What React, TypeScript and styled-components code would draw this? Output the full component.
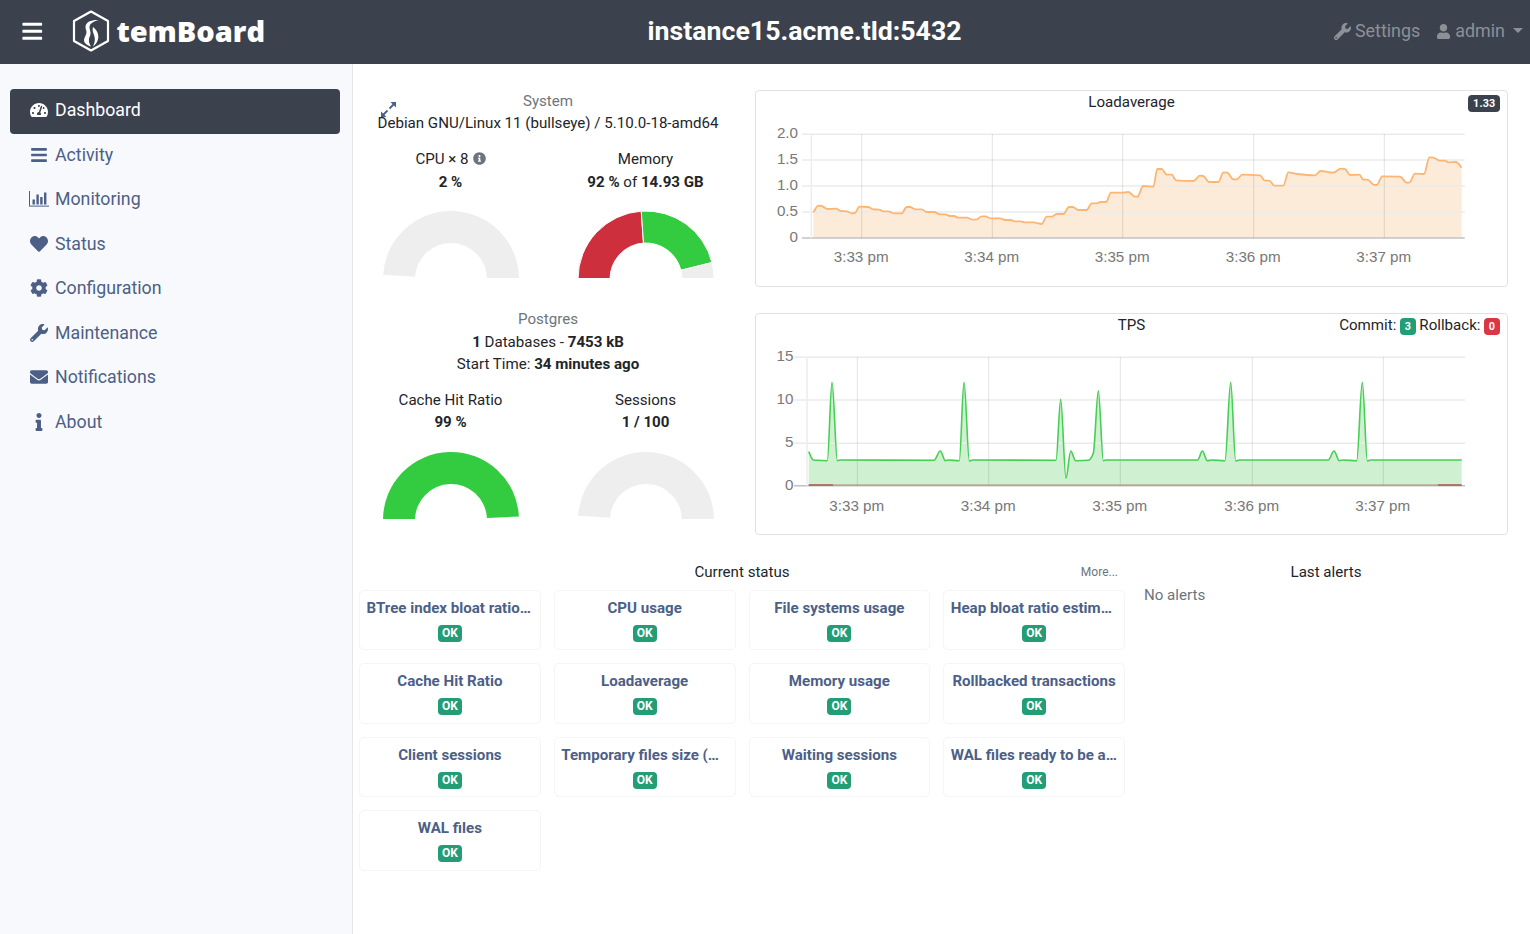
import React from "react";
import styled, { createGlobalStyle } from "styled-components";
import {
  FaBars, FaTachometerAlt, FaHeart, FaCog, FaWrench, FaEnvelope, FaInfo, FaUser, FaInfoCircle,
} from "react-icons/fa";

const Global = createGlobalStyle`
  html, body { margin: 0; padding: 0; background: #fff; }
  body { font-family: Roboto, "Liberation Sans", sans-serif; font-size: 15.1px; line-height: 22.5px; color: #212529; overflow: hidden; }
  * { box-sizing: border-box; }
`;

const Page = styled.div`display: flex; flex-direction: column; height: 934px;`;

const TopBar = styled.header`
  height: 64px; flex: none; background: #3c424d; display: grid; grid-template-columns: auto 1fr auto; align-items: center; padding: 0 7px 2px 21px;
`;
const Brand = styled.div`display: flex; align-items: center; color: #fff;`;
const Burger = styled.span`display: flex; font-size: 22.5px; margin-right: 28px;`;
const LogoText = styled.span`
  font-family: "Open Sans", sans-serif; font-weight: 800; font-size: 29px; margin-left: 7px; line-height: 40px; margin-top: -1px;
`;
const Title = styled.h1`margin: 0; padding-left: 10px; text-align: center; font-size: 26.7px; font-weight: 700; color: #fff; line-height: 40px;`;
const UserArea = styled.div`display: flex; justify-content: flex-end; align-items: center; color: #8c9097; font-size: 17.9px; gap: 16px;`;
const UserLink = styled.span`display: flex; align-items: center; gap: 4px;`;
const Caret = styled.span`
  width: 0; height: 0; border: 5.5px solid transparent; border-top-color: #8c9097; border-bottom: 0; margin-left: 4px; margin-top: -2px;
`;

const Body = styled.div`display: flex; flex: 1; min-height: 0;`;
const Sidebar = styled.nav`
  width: 353px; flex: none; background: #f8f9fc; border-right: 1px solid #e4e6ea; padding: 25px 12px 0 10px;
`;
const NavItem = styled.div<{ $active?: boolean }>`
  height: 44.5px; display: flex; align-items: center; padding: 0 0 2px 18px; font-size: 17.75px; border-radius: 4px;
  color: ${(p) => (p.$active ? "#fff" : "#4c5f87")};
  background: ${(p) => (p.$active ? "#3c424d" : "transparent")};
`;
const NavIcon = styled.span`width: 22px; margin-right: 5px; display: flex; justify-content: center; align-items: center; font-size: 18px;`;

const Main = styled.main`flex: 1; padding: 26px 22px 0 0; min-width: 0;`;
const TopRow = styled.div`display: grid; grid-template-columns: 390px 1fr; column-gap: 12px;`;
const Summary = styled.section`position: relative; text-align: center;`;
const ExpandIcon = styled.svg`position: absolute; left: 26px; top: 10px; color: #4c5f87;`;
const Muted = styled.div`color: #6c757d;`;
const SystemHead = styled(Muted)`margin-bottom: -1px;`;
const Line = styled.div``;
const GaugeRow = styled.div<{ $top: number }>`display: grid; grid-template-columns: 1fr 1fr; margin-top: ${(p) => p.$top}px;`;
const GaugeCell = styled.div`display: flex; flex-direction: column; align-items: center;`;
const GaugeSvg = styled.svg`display: block; margin-top: 17px;`;
const PgBlock = styled.div`margin-top: 30px;`;
const SmallInfo = styled.span`
  color: #6c757d; font-size: 13px; margin-left: 4px; line-height: 0; display: inline-block; vertical-align: -1px;
`;

const Charts = styled.section`display: flex; flex-direction: column; gap: 26px;`;
const ChartCard = styled.div<{ $h: number }>`
  height: ${(p) => p.$h}px; border: 1px solid #dee2e6; border-radius: 4px; overflow: hidden;
`;
const ChartHead = styled.div`
  display: grid; grid-template-columns: 1fr auto 1fr; padding: 0 7px; height: 22px; line-height: 22.5px;
`;
const HeadRight = styled.div`display: flex; justify-content: flex-end; align-items: center; gap: 3.5px;`;
const Badge = styled.span<{ $bg: string }>`
  display: inline-block; background: ${(p) => p.$bg}; color: #fff; font-size: 10.8px; font-weight: 700; line-height: 17px; height: 17px;
  min-width: 16px; text-align: center; padding: 0 4.5px; border-radius: 4px; letter-spacing: 0.2px;
`;
const HeadBadge = styled(Badge)`margin-top: 3px;`;
const ChartSvg = styled.svg`display: block;`;

const BottomRow = styled.div`display: grid; grid-template-columns: 766px 1fr; column-gap: 19px; padding-left: 6px; margin-top: 25.5px;`;
const StatusHead = styled.div`display: grid; grid-template-columns: 1fr auto 1fr; align-items: center; height: 22px; margin-bottom: 7px; line-height: 23px;`;
const More = styled.span`justify-self: end; color: #6c757d; font-size: 12px; padding-right: 7px;`;
const StatusGrid = styled.div`display: grid; grid-template-columns: repeat(4, 1fr); gap: 13px;`;
const StatusCard = styled.div`
  height: 60.5px; border: 1px solid #f5f5f5; border-radius: 5px; padding: 7px 6.5px 0; text-align: center; min-width: 0;
`;
const StatusName = styled.div<{ $clipped: boolean }>`
  color: #4c5f87; font-weight: 700; font-size: 15.1px; white-space: nowrap; line-height: 21.5px;
  text-align: ${(p) => (p.$clipped ? "left" : "center")};
`;
const OkBadge = styled(Badge)`
  font-size: 12px; margin-top: 5.5px; display: block; width: 24px; margin-left: auto; margin-right: auto; line-height: 16px; letter-spacing: 0; padding: 0;
`;
const AlertsHead = styled.div`height: 22px; text-align: center; margin-bottom: 1px; line-height: 23px;`;
const NoAlerts = styled.div`color: #6c757d;`;

const arc = (a0: number, a1: number, R = 68, r = 36, c = 69) => {
  const t = (d: number) => (d * Math.PI) / 180;
  const p = (rad: number, d: number) => `${(c + rad * Math.cos(t(d))).toFixed(2)} ${(c - rad * Math.sin(t(d))).toFixed(2)}`;
  return `M${p(R, a0)} A${R} ${R} 0 0 1 ${p(R, a1)} L${p(r, a1)} A${r} ${r} 0 0 0 ${p(r, a0)}Z`;
};

const RED = "#cd2f3c", GREEN = "#33cc40", GRAY = "#eeeeee";

const Gauge = ({ parts }: { parts: [number, number, string][] }) => (
  <GaugeSvg width={138} height={68} viewBox="0 0 138 68">
    {parts.map(([a, b, c], i) => (
      <path key={i} d={arc(a, b)} fill={c} stroke="#fff" strokeWidth={parts.length > 1 ? 1 : 0} />
    ))}
  </GaugeSvg>
);

/* Monotone cubic through the sampled points: rounds the corners as the chart library does, without overshoot. */
const spline = (pts: number[][]) => {
  const n = pts.length;
  const s = pts.slice(0, -1).map((p, i) => (pts[i + 1][1] - p[1]) / Math.max(pts[i + 1][0] - p[0], 0.01));
  const m = pts.map((_, i) => {
    if (i === 0) return s[0];
    if (i === n - 1) return s[n - 2];
    const a = s[i - 1], b = s[i];
    return a * b <= 0 ? 0 : (2 * a * b) / (a + b);
  });
  let d = `M${pts[0][0].toFixed(1)} ${pts[0][1].toFixed(1)}`;
  for (let i = 0; i < n - 1; i++) {
    const [x0, y0] = pts[i], [x1, y1] = pts[i + 1];
    const h = (x1 - x0) / 3;
    d += ` C${(x0 + h).toFixed(1)} ${(y0 + m[i] * h).toFixed(1)} ${(x1 - h).toFixed(1)} ${(y1 - m[i + 1] * h).toFixed(1)} ${x1.toFixed(1)} ${y1.toFixed(1)}`;
  }
  return d;
};

const loadA = [[190,382],[205,362],[215,363],[232,372],[258,371],[272,378],[290,379],[305,385],[315,384],[328,365],[355,366],[370,373],[388,374],[400,379],[415,379],[430,385],[455,385],[470,366],[480,366],[497,373],[515,373],[530,381],[552,381],[570,388],[585,388],[600,393],[612,393],[625,398],[650,398],[668,404],[680,403],[695,394],[705,394],[722,400],[750,400],[765,405],[780,405],[795,409],[810,409],[825,412],[850,412],[875,417],[890,395],[905,395],[920,387],[940,387],[957,366],[968,366],[985,375],[1010,375],[1025,355],[1040,355],[1052,351],[1068,351],[1083,323],[1115,323],[1135,321],[1155,335],[1165,335]];
const loadB = [[22,335],[40,303],[70,305],[82,252],[95,252],[110,269],[125,269],[138,286],[190,288],[210,272],[220,273],[237,291],[265,291],[280,262],[292,263],[310,283],[320,283],[337,269],[390,271],[405,287],[418,287],[433,302],[460,302],[475,262],[500,267],[555,271],[572,258],[610,263],[632,251],[645,252],[660,270],[688,269],[700,284],[712,284],[733,300],[740,300],[757,274],[810,275],[830,293],[838,293],[855,266],[882,267],[898,217],[910,218],[930,227],[945,227],[955,232],[978,231],[995,248]];
const loadPts = [...loadA.map(([x, y]) => [750 + x / 3, 85 + y / 3]), ...loadB.map(([x, y]) => [1130 + x / 3, 85 + y / 3])];

const tpsA = [[176,425],[190,450],[200,451],[232,452],[246,217],[262,452],[272,450],[552,451],[571,423],[586,452],[595,450],[628,452],[642,217],[658,453],[668,450],[918,451],[932,268],[948,505],[962,423],[977,452],[1015,451],[1030,430],[1045,242],[1060,452],[1070,450]];
const tpsB = [[195,450],[203,450],[217,423],[232,452],[245,450],[285,452],[302,217],[317,453],[328,450],[595,450],[612,423],[628,452],[640,450],[680,452],[697,217],[712,453],[722,450],[995,450]];
const tpsPts = [...tpsA.map(([x, y]) => [750 + x / 3, 310 + y / 3]), ...tpsB.map(([x, y]) => [1130 + x / 3, 310 + y / 3])];

type Axis = { ys: [string, number][]; xs: [string, number][]; left: number; right: number; zero: number; top: number; labelX: number; labelY: number; tickX: number };

const Grid = ({ a }: { a: Axis }) => (
  <g fontFamily='"Liberation Sans", sans-serif' fontSize={15.2} fill="#787878">
    {a.ys.map(([t, y]) => (
      <g key={t}>
        <line x1={a.tickX} x2={a.right} y1={y} y2={y} stroke={t === "0" ? "#c2c2c2" : "#ebebeb"} strokeWidth={t === "0" ? 1.4 : 1.6} />
        <text x={a.labelX} y={y + 4} textAnchor="end">{t}</text>
      </g>
    ))}
    <line x1={a.left} x2={a.left} y1={a.top} y2={a.zero} stroke="#ededed" strokeWidth={1.5} />
    {a.xs.map(([t, x]) => (
      <g key={t}>
        <line x1={x} x2={x} y1={a.top} y2={a.zero} stroke="#000" strokeOpacity={0.11} strokeWidth={1} />
        <text x={x - 0.5} y={a.labelY} textAnchor="middle">{t}</text>
      </g>
    ))}
  </g>
);

const loadAxis: Axis = {
  ys: [["2.0", 134.3], ["1.5", 160], ["1.0", 186], ["0.5", 212], ["0", 238]],
  xs: [["3:33 pm", 861.7], ["3:34 pm", 992.3], ["3:35 pm", 1122.7], ["3:36 pm", 1253.7], ["3:37 pm", 1384.3]],
  left: 811.3, right: 1464.7, zero: 238, top: 134, labelX: 798, labelY: 262, tickX: 802,
};
const tpsAxis: Axis = {
  ys: [["15", 357.3], ["10", 400], ["5", 443.3], ["0", 485.7]],
  xs: [["3:33 pm", 857.3], ["3:34 pm", 988.7], ["3:35 pm", 1120.3], ["3:36 pm", 1252.3], ["3:37 pm", 1383.3]],
  left: 807, right: 1465, zero: 485.7, top: 357, labelX: 793.5, labelY: 511, tickX: 794,
};

const MonitorIcon = () => (
  <svg width={20} height={16} viewBox="0 0 20 16" fill="currentColor">
    <rect x="0" y="0" width="1" height="15" />
    <rect x="0" y="14.6" width="20" height="1" />
    <rect x="3.5" y="8.5" width="2.4" height="5" />
    <rect x="7.4" y="3.5" width="2.4" height="10" />
    <rect x="11.2" y="6" width="2.4" height="7.5" />
    <rect x="15" y="1.5" width="2.4" height="12" />
  </svg>
);

const Logo = () => (
  <svg width={38} height={42} viewBox="0 0 38 42" fill="none">
    <path d="M19 1.5 L36 11 V31 L19 40.5 L2 31 V11Z" stroke="#fff" strokeWidth={2.2} strokeLinejoin="round" />
    <path d="M27 10 C20 9.5 14 11.5 13.5 16.5 C13.3 20 15.5 21 14 24.5 C12.5 28 11 30 13 33 C14.5 35 17 36 19 36.5 C17 33 16 30 18 26 C19.5 23 17.5 19.5 17.5 17 C17.5 14 21 11.5 27 10Z" fill="#fff" />
    <path d="M21 17 C24.5 19.5 27 24 26.2 28.5 C25.5 32 23.5 35 21 36.5 C23 32 23.5 28.5 22 25 C21 22.5 20 20 21 17Z" fill="#fff" />
  </svg>
);

const Expand = () => (
  <ExpandIcon width={19} height={19} viewBox="0 0 19 19" fill="none" stroke="currentColor" strokeWidth={1.8}>
    <path d="M10.5 8.5 L16 3" />
    <path d="M8.5 10.5 L3 16" />
    <path d="M11.5 2 H17 V7.5Z" fill="currentColor" stroke="none" />
    <path d="M7.5 17 H2 V11.5Z" fill="currentColor" stroke="none" />
  </ExpandIcon>
);

const nav: [string, React.ReactNode][] = [
  ["Dashboard", <FaTachometerAlt />],
  ["Activity", <FaBars />],
  ["Monitoring", <MonitorIcon />],
  ["Status", <FaHeart />],
  ["Configuration", <FaCog />],
  ["Maintenance", <FaWrench />],
  ["Notifications", <FaEnvelope />],
  ["About", <FaInfo />],
];

const statuses = [
  "BTree index bloat ratio…", "CPU usage", "File systems usage", "Heap bloat ratio estim…",
  "Cache Hit Ratio", "Loadaverage", "Memory usage", "Rollbacked transactions",
  "Client sessions", "Temporary files size (…", "Waiting sessions", "WAL files ready to be a…",
  "WAL files",
];

export default function App() {
  const loadPath = spline(loadPts);
  const tpsPath = spline(tpsPts);
  return (
    <Page>
      <Global />
      <TopBar>
        <Brand>
          <Burger><FaBars /></Burger>
          <Logo />
          <LogoText>temBoard</LogoText>
        </Brand>
        <Title>instance15.acme.tld:5432</Title>
        <UserArea>
          <UserLink><FaWrench size={17} />Settings</UserLink>
          <UserLink><FaUser size={15} />admin<Caret /></UserLink>
        </UserArea>
      </TopBar>
      <Body>
        <Sidebar>
          {nav.map(([label, icon], i) => (
            <NavItem key={label} $active={i === 0}>
              <NavIcon>{icon}</NavIcon>
              {label}
            </NavItem>
          ))}
        </Sidebar>
        <Main>
          <TopRow>
            <Summary>
              <Expand />
              <SystemHead>System</SystemHead>
              <Line>Debian GNU/Linux 11 (bullseye) / 5.10.0-18-amd64</Line>
              <GaugeRow $top={14}>
                <GaugeCell>
                  <Line>CPU × 8<SmallInfo><FaInfoCircle /></SmallInfo></Line>
                  <Line><b>2 %</b></Line>
                  <Gauge parts={[[176.4, 0, GRAY]]} />
                </GaugeCell>
                <GaugeCell>
                  <Line>Memory</Line>
                  <Line><b>92 %</b> of <b>14.93 GB</b></Line>
                  <Gauge parts={[[180, 94, RED], [94, 14, GREEN], [14, 0, GRAY]]} />
                </GaugeCell>
              </GaugeRow>
              <PgBlock>
                <Muted>Postgres</Muted>
                <Line><b>1</b> Databases - <b>7453 kB</b></Line>
                <Line>Start Time: <b>34 minutes ago</b></Line>
              </PgBlock>
              <GaugeRow $top={13}>
                <GaugeCell>
                  <Line>Cache Hit Ratio</Line>
                  <Line><b>99 %</b></Line>
                  <Gauge parts={[[180, 3, GREEN]]} />
                </GaugeCell>
                <GaugeCell>
                  <Line>Sessions</Line>
                  <Line><b>1 / 100</b></Line>
                  <Gauge parts={[[176.4, 0, GRAY]]} />
                </GaugeCell>
              </GaugeRow>
            </Summary>
            <Charts>
              <ChartCard $h={197}>
                <ChartHead>
                  <span />
                  <span>Loadaverage</span>
                  <HeadRight><HeadBadge $bg="#3c424d">1.33</HeadBadge></HeadRight>
                </ChartHead>
                <ChartSvg width={751} height={173} viewBox="756 113 751 173">
                  <path d={`${loadPath} L${loadPts[loadPts.length - 1][0]} 238 L${loadPts[0][0]} 238Z`} fill="#fdebda" />
                  <Grid a={loadAxis} />
                  <path d={loadPath} fill="none" stroke="#fdb672" strokeWidth={1.8} strokeLinejoin="round" />
                </ChartSvg>
              </ChartCard>
              <ChartCard $h={222}>
                <ChartHead>
                  <span />
                  <span>TPS</span>
                  <HeadRight>Commit: <HeadBadge $bg="#229d75">3</HeadBadge> Rollback: <HeadBadge $bg="#dc3545">0</HeadBadge></HeadRight>
                </ChartHead>
                <ChartSvg width={751} height={198} viewBox="756 336 751 198">
                  <path d={`${tpsPath} L${tpsPts[tpsPts.length - 1][0]} 485.7 L${tpsPts[0][0]} 485.7Z`} fill="#d0f0d2" />
                  <Grid a={tpsAxis} />
                  <path d={tpsPath} fill="none" stroke="#45cf53" strokeWidth={1.6} strokeLinejoin="round" />
                  <line x1={808.7} x2={1461.7} y1={485} y2={485} stroke="#b08a6e" strokeWidth={1} />
                  <line x1={808.7} x2={833} y1={485} y2={485} stroke="#a03a30" strokeWidth={1.2} />
                  <line x1={1438} x2={1461.7} y1={485} y2={485} stroke="#a03a30" strokeWidth={1.2} />
                </ChartSvg>
              </ChartCard>
            </Charts>
          </TopRow>
          <BottomRow>
            <div>
              <StatusHead>
                <span />
                <span>Current status</span>
                <More>More...</More>
              </StatusHead>
              <StatusGrid>
                {statuses.map((s) => (
                  <StatusCard key={s}>
                    <StatusName $clipped={s.endsWith("…")}>{s}</StatusName>
                    <OkBadge $bg="#229d75">OK</OkBadge>
                  </StatusCard>
                ))}
              </StatusGrid>
            </div>
            <div>
              <AlertsHead>Last alerts</AlertsHead>
              <NoAlerts>No alerts</NoAlerts>
            </div>
          </BottomRow>
        </Main>
      </Body>
    </Page>
  );
}
